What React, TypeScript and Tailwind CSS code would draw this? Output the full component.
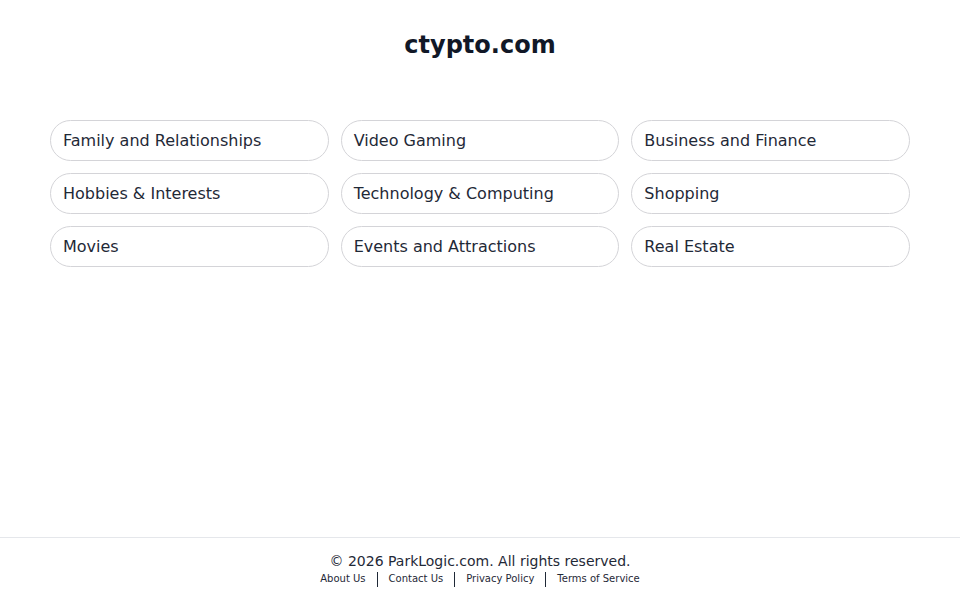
const topics = [
  "Family and Relationships",
  "Video Gaming",
  "Business and Finance",
  "Hobbies & Interests",
  "Technology & Computing",
  "Shopping",
  "Movies",
  "Events and Attractions",
  "Real Estate",
];

const links = ["About Us", "Contact Us", "Privacy Policy", "Terms of Service"];

export default function App() {
  return (
    <div className="flex min-h-screen flex-col bg-white font-['DejaVu_Sans',sans-serif] text-[#111827]">
      <main className="flex-1 px-[50px]">
        <h1 className="pt-[29px] text-center text-2xl leading-8 font-bold text-[#111827]">ctypto.com</h1>
        <div className="mt-[59px] grid grid-cols-3 gap-3">
          {topics.map((t) => (
            <a
              key={t}
              href="#"
              className="flex h-[41px] items-center rounded-full border border-[#d4d4d8] bg-white px-3 text-base text-[#1f2937]"
            >
              {t}
            </a>
          ))}
        </div>
      </main>

      <footer className="border-t border-[#e5e7eb] pt-[13px] pb-[13px] text-center">
        <p className="text-sm leading-5 text-[#1f2937]">© 2026 ParkLogic.com. All rights reserved.</p>
        <div className="flex items-center justify-center text-[10px] leading-4 text-[#1f2937]">
          {links.map((l, i) => (
            <span key={l} className="flex items-center">
              {i > 0 && <span className="mx-[11px] h-[15px] w-px bg-[#1f2937]" />}
              <a href="#">{l}</a>
            </span>
          ))}
        </div>
      </footer>
    </div>
  );
}
